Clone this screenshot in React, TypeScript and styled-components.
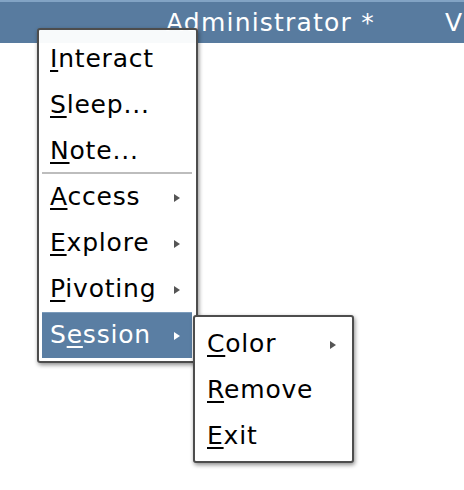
import { FC } from "react";
import styled, { createGlobalStyle } from "styled-components";

const GlobalStyle = createGlobalStyle`
    html, body {
        margin: 0;
        padding: 0;
        background: #ffffff;
    }

    body {
        font-family: "DejaVu Sans", "Liberation Sans", sans-serif;
    }
`;

const StyledPage = styled.div`
    position: relative;
    width: 464px;
    height: 490px;
    overflow: hidden;
    background: #ffffff;
`;

const StyledTitleBar = styled.div`
    height: 41px;
    border-top: 2px solid #82a3c4;
    background: #587b9f;
    display: flex;
    align-items: center;
    padding-left: 166px;
    gap: 70px;
    color: #ffffff;
    font-size: 25px;
    letter-spacing: 1.2px;
    white-space: nowrap;
    line-height: 41px;
`;

const StyledMenu = styled.div<{ $left: number; $top: number }>`
    position: absolute;
    left: ${p => p.$left}px;
    top: ${p => p.$top}px;
    width: 161px;
    box-sizing: border-box;
    padding: 6px 4px 3px 3px;
    border: 2px solid #4d4d4d;
    border-radius: 3px;
    background: rgba(255, 255, 255, 0.96);
    box-shadow: 1px 2px 4px rgba(0, 0, 0, 0.45);
    display: flex;
    flex-direction: column;
`;

const StyledSubMenu = styled(StyledMenu)`
    padding: 4px 4px 2px 4px;
    background: #ffffff;
`;

const StyledRow = styled.div<{ $active?: boolean }>`
    height: 46px;
    display: flex;
    align-items: center;
    justify-content: space-between;
    padding: 0 12px 0 8px;
    font-size: 25px;
    line-height: 46px;
    letter-spacing: 0.8px;
    white-space: nowrap;
    color: ${p => (p.$active ? "#ffffff" : "#000000")};
    background: ${p => (p.$active ? "#5a7ea3" : "transparent")};
    box-shadow: ${p => (p.$active ? "inset 0 1px 0 #7b9bbb" : "none")};

    u {
        text-decoration-thickness: 2px;
        text-underline-offset: 3px;
    }
`;

const StyledArrow = styled.span<{ $active?: boolean }>`
    width: 0;
    height: 0;
    border-top: 4px solid transparent;
    border-bottom: 4px solid transparent;
    border-left: 6px solid ${p => (p.$active ? "#ffffff" : "#555555")};
    margin-top: 2px;
`;

const StyledSeparator = styled.div`
    height: 2px;
    margin: -2px 0 0 0;
    background: #bdbdbd;
`;

type Item = { pre?: string; mnemonic: string; rest: string; sub?: boolean; active?: boolean };

const MenuRow: FC<Item> = ({ pre, mnemonic, rest, sub, active }) => (
    <StyledRow $active={active}>
        <span>
            {pre}
            <u>{mnemonic}</u>
            {rest}
        </span>
        {sub && <StyledArrow $active={active} />}
    </StyledRow>
);

const topItems: Item[] = [
    { mnemonic: "I", rest: "nteract" },
    { mnemonic: "S", rest: "leep..." },
    { mnemonic: "N", rest: "ote..." },
];

const bottomItems: Item[] = [
    { mnemonic: "A", rest: "ccess", sub: true },
    { mnemonic: "E", rest: "xplore", sub: true },
    { mnemonic: "P", rest: "ivoting", sub: true },
    { pre: "S", mnemonic: "e", rest: "ssion", sub: true, active: true },
];

const sessionItems: Item[] = [
    { mnemonic: "C", rest: "olor", sub: true },
    { mnemonic: "R", rest: "emove" },
    { mnemonic: "E", rest: "xit" },
];

export default function App() {
    return (
        <>
            <GlobalStyle />
            <StyledPage>
                <StyledTitleBar>
                    <span>Administrator *</span>
                    <span>V</span>
                </StyledTitleBar>

                <StyledMenu $left={37} $top={28}>
                    {topItems.map(o => <MenuRow key={o.rest} {...o} />)}
                    <StyledSeparator />
                    {bottomItems.map(o => <MenuRow key={o.rest} {...o} />)}
                </StyledMenu>

                <StyledSubMenu $left={193} $top={315}>
                    {sessionItems.map(o => <MenuRow key={o.rest} {...o} />)}
                </StyledSubMenu>
            </StyledPage>
        </>
    );
}
